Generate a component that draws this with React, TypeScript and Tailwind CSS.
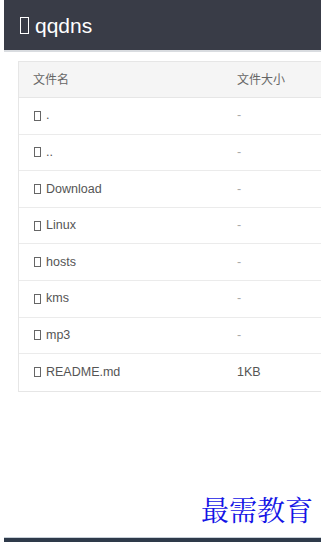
import React from "react";

const rows: [string, string][] = [
  [".", "-"],
  ["..", "-"],
  ["Download", "-"],
  ["Linux", "-"],
  ["hosts", "-"],
  ["kms", "-"],
  ["mp3", "-"],
  ["README.md", "1KB"],
];

function Tofu({ big }: { big?: boolean }) {
  return big ? (
    <span className="inline-block w-[9px] h-[17px] border-[1.5px] border-white mr-[6px] align-[-2px]" />
  ) : (
    <span className="inline-block w-[7px] h-[10px] border border-[#666] mr-[5px] align-[-1px]" />
  );
}

export default function App() {
  return (
    <div className="w-[321px] h-[542px] bg-white overflow-hidden flex flex-col" style={{ fontFamily: '"Liberation Sans", Arial, "Noto Sans CJK SC", sans-serif' }}>
      <div className="ml-[4px] h-[50px] bg-[#393c47] flex items-center pl-[16px] shrink-0">
        <span className="text-white text-[21px] leading-none flex items-center">
          <Tofu big />
          qqdns
        </span>
      </div>
      <div className="ml-[4px] h-[2px] bg-[#d9dce0] shrink-0" />
      <div className="pl-[18px] pt-[9px] shrink-0">
        <div className="w-[330px] border border-[#e6e6e6] border-r-0">
          <div className="h-[36px] bg-[#f5f5f5] flex items-center text-[12px] text-[#666] border-b border-[#e6e6e6]">
            <div className="w-[218px] pl-[14px]">文件名</div>
            <div>文件大小</div>
          </div>
          {rows.map(([n, s], i) => (
            <div
              key={i}
              className={`h-[36.6px] flex items-center text-[12.5px] text-[#555] ${i < rows.length - 1 ? "border-b border-[#ebebeb]" : ""}`}
            >
              <div className="w-[218px] pl-[15px] flex items-center">
                <Tofu />
                {n}
              </div>
              <div className={s === "-" ? "text-[#aaa]" : "text-[#555]"}>{s}</div>
            </div>
          ))}
        </div>
      </div>
      <div className="flex-1" />
      <div className="flex justify-end pr-[8px] pb-[14px]">
        <span className="text-[28px] leading-none text-[#1414e6] tracking-[0px]" style={{ fontFamily: '"Noto Serif CJK SC", "Noto Sans CJK SC", serif' }}>
          最需教育
        </span>
      </div>
      <div className="ml-[4px] h-[1px] bg-[#c8d0d8] shrink-0" />
      <div className="ml-[4px] h-[4px] bg-[#2e3a4a] shrink-0" />
    </div>
  );
}
